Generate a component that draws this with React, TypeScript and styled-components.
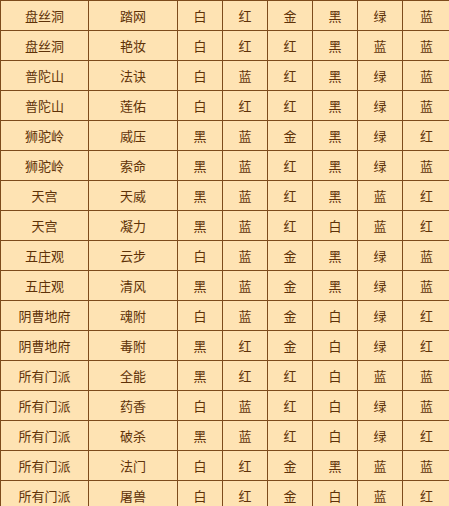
import styled, { createGlobalStyle } from "styled-components";

const GlobalStyle = createGlobalStyle`
  html, body {
    margin: 0;
    padding: 0;
    background: #fee3b3;
    overflow: hidden;
  }
`;

const rows: string[][] = [
  ["盘丝洞", "踏网", "白", "红", "金", "黑", "绿", "蓝"],
  ["盘丝洞", "艳妆", "白", "红", "红", "黑", "蓝", "蓝"],
  ["普陀山", "法诀", "白", "蓝", "红", "黑", "绿", "蓝"],
  ["普陀山", "莲佑", "白", "红", "红", "黑", "绿", "蓝"],
  ["狮驼岭", "威压", "黑", "蓝", "金", "黑", "绿", "红"],
  ["狮驼岭", "索命", "黑", "蓝", "红", "黑", "绿", "蓝"],
  ["天宫", "天威", "黑", "蓝", "红", "黑", "蓝", "红"],
  ["天宫", "凝力", "黑", "蓝", "红", "白", "蓝", "红"],
  ["五庄观", "云步", "白", "蓝", "金", "黑", "绿", "蓝"],
  ["五庄观", "清风", "黑", "蓝", "金", "黑", "绿", "蓝"],
  ["阴曹地府", "魂附", "白", "蓝", "金", "白", "绿", "红"],
  ["阴曹地府", "毒附", "黑", "红", "金", "白", "绿", "红"],
  ["所有门派", "全能", "黑", "红", "红", "白", "蓝", "蓝"],
  ["所有门派", "药香", "白", "蓝", "红", "白", "绿", "蓝"],
  ["所有门派", "破杀", "黑", "蓝", "红", "白", "绿", "红"],
  ["所有门派", "法门", "白", "红", "金", "黑", "蓝", "蓝"],
  ["所有门派", "屠兽", "白", "红", "金", "白", "蓝", "红"],
];

// column widths between the brown lines
const widths = [88, 89, 45, 45, 45, 45, 45, 48];

const S = {
  Table: styled.table`
    border-collapse: collapse;
    table-layout: fixed;
    width: ${widths.reduce((a, b) => a + b, 0) + 1}px;
    background: #fee3b3;
    font-family: "Noto Sans CJK SC", "Liberation Sans", sans-serif;
    font-size: 13px;
    color: #5e3208;
  `,
  Cell: styled.td`
    height: 29px;
    padding: 0;
    border: 1px solid #7d4b1c;
    text-align: center;
    vertical-align: middle;
    line-height: 29px;
    white-space: nowrap;
  `,
};

export default function App() {
  return (
    <>
      <GlobalStyle />
      <S.Table>
        <colgroup>
          {widths.map((w, i) => (
            <col key={i} style={{ width: w }} />
          ))}
        </colgroup>
        <tbody>
          {rows.map((r, i) => (
            <tr key={i}>
              {r.map((c, j) => (
                <S.Cell key={j}>{c}</S.Cell>
              ))}
            </tr>
          ))}
        </tbody>
      </S.Table>
    </>
  );
}
